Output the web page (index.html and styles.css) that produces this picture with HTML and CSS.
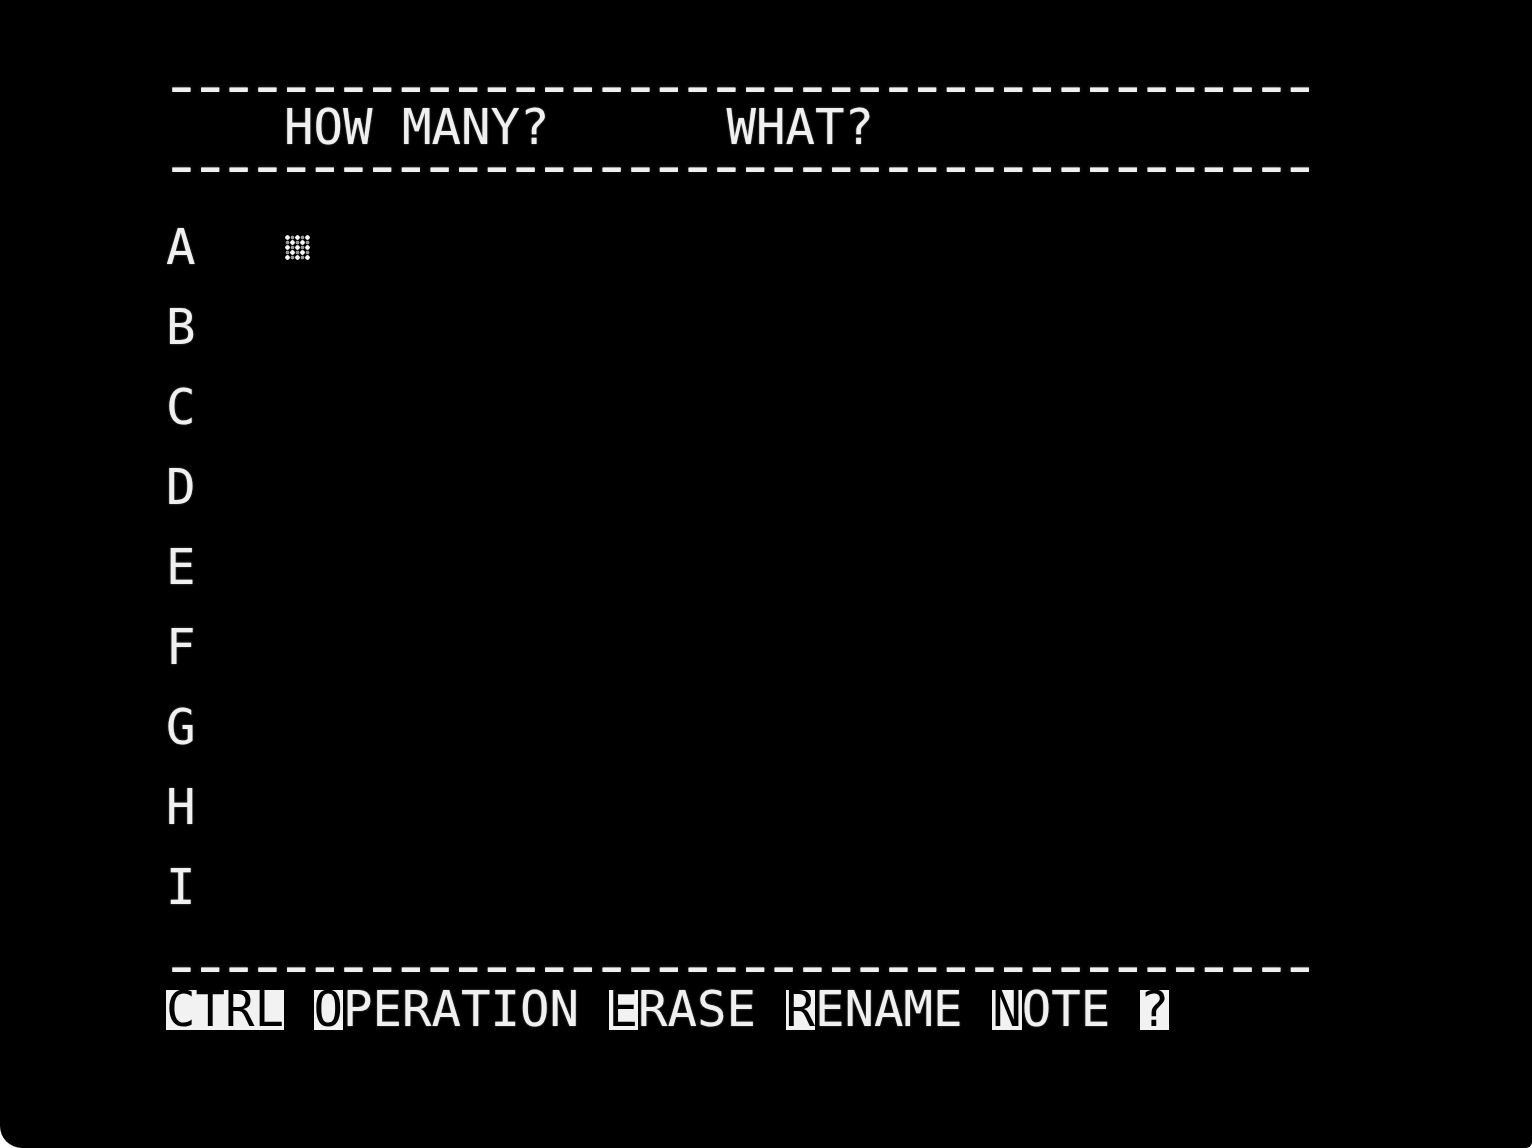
FILE: index.html
```html
<!DOCTYPE html>
<html lang="en">
<head>
<meta charset="utf-8">
<title>HOW MANY? WHAT?</title>
<link rel="stylesheet" href="styles.css">
</head>
<body>
<main class="screen">
  <div class="row rule"><span class="dashes">----------------------------------------</span></div>
  <div class="row">    HOW MANY?      WHAT?</div>
  <div class="row rule"><span class="dashes">----------------------------------------</span></div>
  <div class="row"></div>
  <div class="row">A   <span class="cursor"></span></div>
  <div class="row"></div>
  <div class="row">B</div>
  <div class="row"></div>
  <div class="row">C</div>
  <div class="row"></div>
  <div class="row">D</div>
  <div class="row"></div>
  <div class="row">E</div>
  <div class="row"></div>
  <div class="row">F</div>
  <div class="row"></div>
  <div class="row">G</div>
  <div class="row"></div>
  <div class="row">H</div>
  <div class="row"></div>
  <div class="row">I</div>
  <div class="row"></div>
  <div class="row rule"><span class="dashes">----------------------------------------</span></div>
  <div class="row menu"><span class="inv">CTRL</span> <span class="inv">O</span>PERATION <span class="inv">E</span>RASE <span class="inv">R</span>ENAME <span class="inv">N</span>OTE <span class="inv">?</span></div>
</main>
</body>
</html>
```

FILE: styles.css
```css
html, body {
  margin: 0;
  padding: 0;
  background: #ffffff;
}

.screen {
  box-sizing: border-box;
  width: 1532px;
  height: 1148px;
  background: #000000;
  border-radius: 0 0 6px 22px;
  padding: 68px 0 0 166px;
  overflow: hidden;
  color: #f0f0f0;
  font-family: "DejaVu Sans Mono", "Liberation Mono", monospace;
  font-size: 49px;
  text-shadow: 0 0 2px rgba(255, 255, 255, 0.45);
}

.row {
  height: 40px;
  line-height: 40px;
  white-space: pre;
}

.rule {
  font-size: 19px;
}

.rule .dashes {
  display: inline-block;
  margin-left: -5.8px;
  letter-spacing: -3.77px;
  transform: scaleX(3.74);
  transform-origin: 0 50%;
  text-shadow:
    0 1px 0 #f0f0f0,
    0 -1px 0 #f0f0f0,
    0 1.8px 0 #f0f0f0,
    0 0 2px rgba(255, 255, 255, 0.5);
}

.menu {
  margin-top: 2px;
}

.inv {
  display: inline-block;
  height: 40px;
  line-height: 40px;
  background: #f2f2f2;
  color: #000000;
  text-shadow: none;
  vertical-align: top;
}

.cursor {
  display: inline-block;
  width: 25px;
  height: 25px;
  margin-left: 1px;
  vertical-align: 4px;
  background:
    radial-gradient(circle at 2.5px 2.5px, rgba(255,255,255,0.95) 1.9px, rgba(255,255,255,0) 2.6px) 0 0 / 10px 10px,
    radial-gradient(circle at 7.5px 7.5px, rgba(255,255,255,0.95) 1.9px, rgba(255,255,255,0) 2.6px) 0 0 / 10px 10px,
    radial-gradient(circle at 2.5px 2.5px, rgba(255,255,255,0.6) 1.5px, rgba(255,255,255,0) 2.3px) 0 0 / 5px 5px;
  filter: blur(0.4px);
}
```
